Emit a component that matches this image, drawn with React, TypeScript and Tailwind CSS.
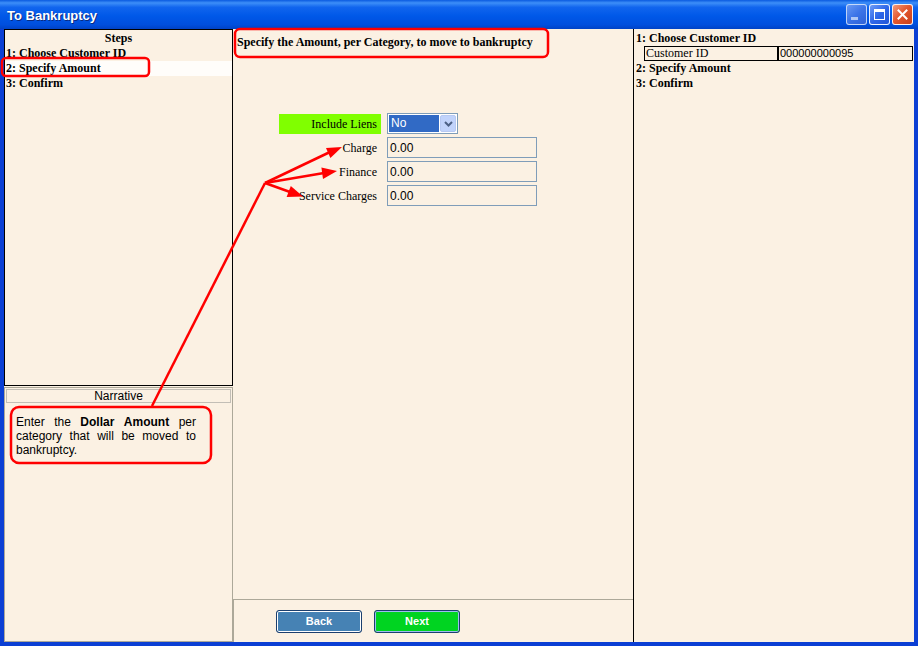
import React from 'react'

const serif = "font-['Liberation_Serif',serif]"
const sans = "font-['Liberation_Sans',Arial,sans-serif]"

const steps = ['1: Choose Customer ID', '2: Specify Amount', '3: Confirm']

// narrative lines, laid out word by word so they read justified
const narrative: { w: string; b?: boolean }[][] = [
  [{ w: 'Enter' }, { w: 'the' }, { w: 'Dollar', b: true }, { w: 'Amount', b: true }, { w: 'per' }],
  [{ w: 'category' }, { w: 'that' }, { w: 'will' }, { w: 'be' }, { w: 'moved' }, { w: 'to' }],
]

function WinButton({ kind }: { kind: 'min' | 'max' | 'close' }) {
  const face =
    kind === 'close'
      ? 'bg-[linear-gradient(135deg,#f29a7c_0%,#e4582f_45%,#c7401c_100%)]'
      : kind === 'min'
      ? 'bg-[linear-gradient(135deg,#7ea6f5_0%,#4a7be8_50%,#3a66d6_100%)] opacity-80'
      : 'bg-[linear-gradient(135deg,#6e9cf7_0%,#2f67e8_50%,#2156d8_100%)]'
  return (
    <div className={`w-[21px] h-[21px] rounded-[3px] border border-white/90 flex items-center justify-center ${face}`}>
      {kind === 'min' && <div className="w-[7px] h-[3px] bg-white/80 mt-[8px] -ml-[4px]" />}
      {kind === 'max' && <div className="w-[11px] h-[11px] border border-white border-t-[3px]" />}
      {kind === 'close' && (
        <svg width="11" height="11" viewBox="0 0 11 11">
          <path d="M1.5 1.5 L9.5 9.5 M9.5 1.5 L1.5 9.5" stroke="white" strokeWidth="2" strokeLinecap="square" />
        </svg>
      )}
    </div>
  )
}

function Field({ label, value }: { label: string; value: string }) {
  return (
    <div className="flex items-center gap-[6px] h-[21px]">
      <div className={`w-[102px] text-right pr-[4px] text-[12px] text-black ${serif}`}>{label}</div>
      <div className={`w-[150px] h-[21px] border border-[#7f9db9] bg-[#fbf1e3] flex items-center px-[2px] text-[12px] text-black ${sans}`}>
        {value}
      </div>
    </div>
  )
}

export default function App() {
  return (
    <div className="relative w-[918px] h-[646px] bg-[#0b3fd4] flex flex-col overflow-hidden">
      {/* Title bar */}
      <div className="h-[29px] flex items-center justify-between pl-[7px] pr-[5px] bg-[linear-gradient(to_bottom,#0a5ae0_0%,#3d8ff8_10%,#1165ee_25%,#0058e8_55%,#004fde_85%,#0042c6_100%)]">
        <span className={`text-white font-bold text-[13px] pt-[2px] [text-shadow:1px_1px_0_#0a2a80] ${sans}`}>To Bankruptcy</span>
        <div className="flex gap-[2px]">
          <WinButton kind="min" />
          <WinButton kind="max" />
          <WinButton kind="close" />
        </div>
      </div>

      <div className="flex-1 flex px-[4px] pb-[4px]">
        <div className="flex-1 flex bg-[#fbf1e3]">
          {/* Left column */}
          <div className="w-[229px] flex flex-col">
            <div className={`h-[357px] pt-[1px] border border-black ${serif} text-[12px] font-bold text-black`}>
              <div className="h-[15px] leading-[15px] text-center">Steps</div>
              {steps.map((s, i) => (
                <div key={s} className={`h-[15px] leading-[15px] pl-[1px] ${i === 1 ? 'bg-[#fffdfa]' : ''}`}>
                  {s}
                </div>
              ))}
            </div>
            <div className="flex-1 mt-[1px] border border-[#aca899] p-[1px]">
              <div className={`h-[14px] leading-[12px] border border-[#c2beb6] text-center text-[12px] text-black ${sans}`}>
                Narrative
              </div>
              <div className={`mt-[12px] ml-[10px] w-[180px] text-[12px] leading-[14px] text-black ${sans}`}>
                {narrative.map((line, i) => (
                  <div key={i} className="flex justify-between">
                    {line.map((t, j) => (
                      <span key={j} className={t.b ? 'font-bold' : ''}>
                        {t.w}
                      </span>
                    ))}
                  </div>
                ))}
                <div>bankruptcy.</div>
              </div>
            </div>
          </div>

          {/* Middle column */}
          <div className="w-[400px] flex flex-col">
            <div className={`pl-[4px] pt-[4px] text-[12px] font-bold text-black ${serif}`}>
              Specify the Amount, per Category, to move to bankruptcy
            </div>
            <div className="mt-[62px] ml-[46px] flex flex-col gap-[3px]">
              <div className="flex items-center gap-[6px] h-[21px]">
                <div className={`w-[102px] h-[20px] leading-[20px] bg-[#80ff00] text-right pr-[4px] text-[12px] text-black ${serif}`}>
                  Include Liens
                </div>
                <div className="w-[71px] h-[21px] border border-[#7f9db9] bg-white flex items-center p-[1px] gap-[1px]">
                  <div className={`flex-1 h-full bg-[#316ac5] text-white text-[12px] leading-[17px] pl-[2px] ${sans}`}>No</div>
                  <div className="w-[16px] h-full rounded-[2px] bg-[#c1d3fb] border border-[#b7c9f2] flex items-center justify-center">
                    <svg width="9" height="6" viewBox="0 0 9 6">
                      <path d="M1 1 L4.5 4.5 L8 1" fill="none" stroke="#4d6185" strokeWidth="2" />
                    </svg>
                  </div>
                </div>
              </div>
              <Field label="Charge" value="0.00" />
              <Field label="Finance" value="0.00" />
              <Field label="Service Charges" value="0.00" />
            </div>

            <div className="mt-auto h-[43px] border-t border-l border-[#aca899] flex items-center pl-[42px] gap-[12px] pt-[1px]">
              <button className={`w-[86px] h-[23px] rounded-[3px] border border-[#1c3f6e] bg-[#4682b4] shadow-[inset_0_0_0_1px_#ffffff] text-white font-bold text-[11px] ${sans}`}>
                Back
              </button>
              <button className={`w-[86px] h-[23px] rounded-[3px] border border-[#1c3f6e] bg-[#00d421] shadow-[inset_0_0_0_1px_#9dbcf0] text-white font-bold text-[11px] ${sans}`}>
                Next
              </button>
            </div>
          </div>

          {/* Right column */}
          <div className={`flex-1 border-l border-black text-[12px] text-black ${serif}`}>
            <div className="h-[15px] leading-[15px] pl-[2px] mt-[2px] font-bold">1: Choose Customer ID</div>
            <div className="ml-[10px] mr-[1px] h-[15px] flex border border-black">
              <div className="w-[134px] leading-[13px] pl-[1px] border-r-2 border-black">Customer ID</div>
              <div className={`flex-1 leading-[13px] pl-[1px] text-[11px] ${sans}`}>000000000095</div>
            </div>
            <div className="h-[15px] leading-[15px] pl-[2px] font-bold">2: Specify Amount</div>
            <div className="h-[15px] leading-[15px] pl-[2px] font-bold">3: Confirm</div>
          </div>
        </div>
      </div>

      {/* Red annotations */}
      <svg className="absolute inset-0 pointer-events-none" width="918" height="646" viewBox="0 0 918 646">
        <g fill="none" stroke="#ff0000" strokeWidth="2.5">
          <rect x="2" y="58" width="147" height="18" rx="4" />
          <rect x="235" y="29" width="313" height="28" rx="5" />
          <rect x="11" y="407" width="200" height="56" rx="8" />
          <path d="M152 406 L265 183" />
          <path d="M265 183 L330 152" />
          <path d="M265 183 L324 173" />
          <path d="M265 183 L290 192" />
        </g>
        <g fill="#ff0000">
          <polygon points="342,147 330.4,158 326,148" />
          <polygon points="337,171 323,179 321.4,167.5" />
          <polygon points="303,196.5 286.6,197 290.8,186" />
        </g>
      </svg>
    </div>
  )
}
